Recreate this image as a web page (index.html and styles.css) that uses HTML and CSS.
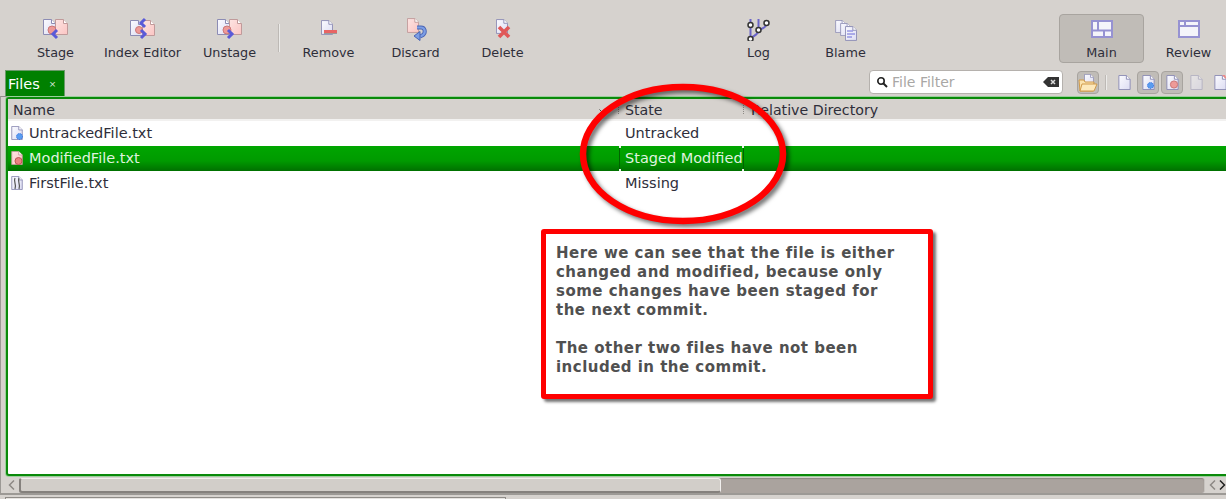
FILE: index.html
```html
<!DOCTYPE html>
<html lang="en">
<head>
<meta charset="utf-8">
<title>Files</title>
<link rel="stylesheet" href="styles.css">
</head>
<body>
<svg class="defs" width="0" height="0" aria-hidden="true">
  <defs>
    <linearGradient id="docfill" x1="0" y1="0" x2="1" y2="1"><stop offset="0" stop-color="#fbfbff"/><stop offset="1" stop-color="#dcdcf2"/></linearGradient>
    <linearGradient id="pinkfill" x1="0" y1="0" x2="1" y2="1"><stop offset="0" stop-color="#fde4e2"/><stop offset="1" stop-color="#fbc5c3"/></linearGradient>
    <symbol id="doc" viewBox="0 0 13 16"><path d="M.5.5h8l4 4v11H.5z" fill="url(#docfill)" stroke="#8c8cb4"/><path d="M8.5.5v4h4" fill="#fff" stroke="#8c8cb4"/></symbol>
    <symbol id="pink" viewBox="0 0 13 16"><path d="M.5.5h8l4 4v11H.5z" fill="url(#pinkfill)" stroke="#c09a9a"/><path d="M8.5.5v4h4" fill="#fff" stroke="#c09a9a"/></symbol>
  </defs>
</svg>
<div class="app">
  <header class="toolbar">
    <button class="tool">
      <svg class="ticon" viewBox="0 0 26 24"><use href="#doc" x="0" y="2" width="13" height="16"/><use href="#pink" x="12" y="2" width="13" height="16"/><circle cx="9" cy="13" r="4" fill="#ee9a98" stroke="#c77"/><path d="M14 13l-4 4 4 4" fill="none" stroke="#5a5ad8" stroke-width="3"/></svg>
      <span>Stage</span>
    </button>
    <button class="tool">
      <svg class="ticon" viewBox="0 0 26 24"><use href="#doc" x="0" y="3" width="13" height="16"/><use href="#pink" x="12" y="3" width="13" height="16"/><circle cx="9" cy="13" r="3.500" fill="#ee9a98" stroke="#c77"/><path d="M15 2l-4 4 4 4" fill="none" stroke="#5a5ad8" stroke-width="3"/><path d="M11 13l4 4-4 4" fill="none" stroke="#5a5ad8" stroke-width="3"/></svg>
      <span>Index Editor</span>
    </button>
    <button class="tool">
      <svg class="ticon" viewBox="0 0 26 24"><use href="#doc" x="0" y="2" width="13" height="16"/><use href="#pink" x="12" y="2" width="13" height="16"/><circle cx="10" cy="13" r="4" fill="#ee9a98" stroke="#c77"/><path d="M11 13l4 4-4 4" fill="none" stroke="#5a5ad8" stroke-width="3"/></svg>
      <span>Unstage</span>
    </button>
    <i class="tsep"></i>
    <button class="tool">
      <svg class="ticon" viewBox="0 0 26 24"><use href="#doc" x="5" y="3" width="12" height="15"/><rect x="8" y="13" width="13" height="3" fill="#e86464"/><rect x="8" y="16" width="13" height="1" fill="#999"/></svg>
      <span>Remove</span>
    </button>
    <button class="tool">
      <svg class="ticon" viewBox="0 0 26 24"><use href="#pink" x="4" y="1" width="12" height="15"/><path d="M14 10.500h4c4 0 5 5 2 7.500l-3 1.500" fill="none" stroke="#4a64b4" stroke-width="4"/><path d="M14 10.500h4c4 0 5 5 2 7.500l-3 1.500" fill="none" stroke="#7c9ee4" stroke-width="2.200"/><path d="M11 19l6-4.500v9z" fill="#7c9ee4" stroke="#4a64b4"/></svg>
      <span>Discard</span>
    </button>
    <button class="tool">
      <svg class="ticon" viewBox="0 0 26 24"><use href="#doc" x="6" y="2" width="12" height="15"/><path d="M9 10l10 10M19 10l-10 10" stroke="#e05858" stroke-width="3.600" fill="none"/></svg>
      <span>Delete</span>
    </button>
    <button class="tool tool-log">
      <svg class="ticon" viewBox="0 0 26 24"><g fill="none" stroke="#6a64c8" stroke-width="2"><path d="M4.500 2v18M12.500 2v11M20.500 6c0 4-4 6-8 7M12.500 13c0 4-4 6-8 8"/></g><g fill="#fff" stroke="#333" stroke-width="1.500"><circle cx="4.500" cy="8" r="2.500"/><circle cx="12.500" cy="13" r="2.500"/><circle cx="20.500" cy="6" r="2.500"/><circle cx="4.500" cy="22" r="2.500"/></g></svg>
      <span>Log</span>
    </button>
    <button class="tool">
      <svg class="ticon" viewBox="0 0 26 24"><use href="#doc" x="2" y="3" width="11" height="13"/><use href="#doc" x="7" y="6" width="11" height="13"/><use href="#doc" x="12" y="9" width="12" height="15"/><path d="M14 14h6M14 17h8M14 20h5" stroke="#6a6ad8"/></svg>
      <span>Blame</span>
    </button>
    <button class="tool tool-main active">
      <svg class="ticon" viewBox="0 0 26 24"><g fill="none" stroke="#9692d2" stroke-width="2"><rect x="3" y="4" width="20" height="16" fill="#f4f4fa"/><path d="M2 13.500h22M9 4v9M15 13v7"/></g></svg>
      <span>Main</span>
    </button>
    <button class="tool tool-review">
      <svg class="ticon" viewBox="0 0 26 24"><g fill="none" stroke="#9692d2" stroke-width="2"><rect x="3" y="4" width="20" height="16" fill="#f4f4fa"/><path d="M2 9h22M9 4v5"/></g></svg>
      <span>Review</span>
    </button>
  </header>

  <div class="tabbar">
    <div class="tab"><span>Files</span><b>×</b></div>
    <div class="filter">
      <svg class="mag" viewBox="0 0 12 12"><circle cx="5" cy="5" r="3.200" fill="none" stroke="#222" stroke-width="1.600"/><path d="M7.500 7.500l3.500 3.500" stroke="#222" stroke-width="2"/></svg>
      <span class="ph">File Filter</span>
      <svg class="clear" viewBox="0 0 16 10"><path d="M0 5l5-5h11v10H5z" fill="#333"/><path d="M8 3l4 4M12 3l-4 4" stroke="#ddd" stroke-width="1.500"/></svg>
    </div>
    <div class="filetools">
      <span class="ft on"><svg viewBox="0 0 20 18" width="20" height="18"><use href="#doc" x="6" y="0" width="10" height="12"/><path d="M1 6h5l1 2h9l-1 9H2z" fill="#fbe3ae" stroke="#d09a4a"/><path d="M4 10h15l-3 7H2z" fill="#fde9bc" stroke="#d09a4a"/></svg></span>
      <i class="fsep"></i>
      <span class="ft"><svg viewBox="0 0 13 15" width="13" height="15"><use href="#doc" width="13" height="15"/></svg></span>
      <span class="ft on"><svg viewBox="0 0 13 15" width="13" height="15"><use href="#doc" width="13" height="15"/><circle cx="8.500" cy="10.500" r="3" fill="#5a9cf0" stroke="#2a6ce0" stroke-dasharray="1 1"/></svg></span>
      <span class="ft on"><svg viewBox="0 0 13 15" width="13" height="15"><use href="#doc" width="13" height="15"/><circle cx="8" cy="9.500" r="3.600" fill="#ee9a98" stroke="#c77"/></svg></span>
      <span class="ft pale"><svg viewBox="0 0 13 15" width="13" height="15"><use href="#doc" width="13" height="15"/></svg></span>
      <span class="ft"><svg viewBox="0 0 13 15" width="13" height="15"><use href="#doc" width="13" height="15"/><path d="M8 0h3l2 4v1z" fill="#ee8a88"/></svg></span>
    </div>
  </div>

  <main class="frame">
    <div class="panel">
      <div class="thead">
        <div class="th th-name">Name<svg class="sort" viewBox="0 0 8 5"><path d="M.5.500L4 4 7.500.500" fill="none" stroke="#444"/></svg></div>
        <div class="th th-state">State</div>
        <div class="th th-dir">Relative Directory</div>
      </div>
      <div class="row">
        <div class="td td-name">
          <svg class="ficon" viewBox="0 0 13 15"><use href="#doc" width="12" height="14"/><circle cx="8.500" cy="10.500" r="3" fill="#5a9cf0" stroke="#2a6ce0" stroke-dasharray="1 1"/></svg>UntrackedFile.txt
        </div>
        <div class="td td-state">Untracked</div>
        <div class="td"></div>
      </div>
      <div class="row selected">
        <div class="td td-name">
          <svg class="ficon" viewBox="0 0 13 15"><use href="#pink" width="12" height="14"/><circle cx="7.500" cy="10" r="3.500" fill="#e88482" stroke="#b55"/></svg>ModifiedFile.txt
        </div>
        <div class="td td-state focus">Staged Modified<i class="c1"></i><i class="c2"></i><i class="c3"></i><i class="c4"></i></div>
        <div class="td"></div>
      </div>
      <div class="row">
        <div class="td td-name">
          <svg class="ficon" viewBox="0 0 13 15"><use href="#doc" width="12" height="14"/><path d="M4 2c-2 4 2 6 0 11M8 2c-2 4 2 6 0 11" fill="none" stroke="#555" stroke-width="1.200"/></svg>FirstFile.txt
        </div>
        <div class="td td-state">Missing</div>
        <div class="td"></div>
      </div>
    </div>
    <div class="hscroll">
      <span class="arrow arrow-l"><svg viewBox="0 0 7 10" width="7" height="10"><path d="M6 .500L1.500 5 6 9.500" fill="none" stroke="#8d8985" stroke-width="1.500"/></svg></span>
      <div class="trough"><div class="thumb"></div></div>
      <span class="arrow arrow-l2"><svg viewBox="0 0 7 10" width="7" height="10"><path d="M6 .500L1.500 5 6 9.500" fill="none" stroke="#8d8985" stroke-width="1.500"/></svg></span>
      <span class="arrow arrow-r"><svg viewBox="0 0 7 10" width="7" height="10"><path d="M1 .500L5.500 5 1 9.500" fill="none" stroke="#222" stroke-width="1.500"/></svg></span>
    </div>
  </main>
  <footer class="foot"><div class="foot-tab"></div></footer>

  <svg class="ring" viewBox="0 0 224 160" width="224" height="160" aria-hidden="true"><ellipse cx="104" cy="72" rx="100" ry="67" fill="none" stroke="#ff0000" stroke-width="6.500"/></svg>
  <aside class="note">
    <p>Here we can see that the file is either<br>changed and modified, because only<br>some changes have been staged for<br>the next commit.</p>
    <p>The other two files have not been<br>included in the commit.</p>
  </aside>
</div>
</body>
</html>
```

FILE: styles.css
```css
* { box-sizing: border-box; }
html, body { margin: 0; height: 100%; overflow: hidden; background: #d6d2ce; }
.defs { position: absolute; }
.app {
  position: relative;
  width: 1226px;
  height: 499px;
  overflow: hidden;
  display: flex;
  flex-direction: column;
  font-family: "DejaVu Sans", sans-serif;
  color: #2e2e3a;
}

/* toolbar */
.toolbar { flex: 0 0 70px; display: flex; align-items: flex-start; padding-left: 12px; padding-top: 14px; }
.tool {
  flex: 0 0 87px;
  height: 49px;
  padding: 2px 0 0;
  border: 1px solid transparent;
  border-radius: 4px;
  background: none;
  font: 12.8px/16px "DejaVu Sans", sans-serif;
  color: #2e2e3a;
  display: flex;
  flex-direction: column;
  align-items: center;
}
.ticon { width: 26px; height: 24px; margin-bottom: 4px; }
.tsep { flex: 0 0 2px; height: 28px; margin: 10px 5px 0; background: linear-gradient(90deg, #bdb9b5 50%, #ecebe9 50%); }
.tool-log { margin-left: 169px; }
.tool-main { flex-basis: 85px; margin-left: 170px; }
.tool-review { margin-left: 1px; }
.active { background: #c0bcb7; border-color: #a8a49f; }

/* tab row */
.tabbar { flex: 0 0 26px; display: flex; align-items: flex-start; padding-left: 5px; }
.tab {
  flex: 0 0 60px;
  height: 26px;
  padding-left: 2px;
  background: #008000;
  border: 1px solid #6a9a6a;
  border-bottom: 0;
  color: #fff;
  font-size: 14.5px;
  line-height: 24px;
  display: flex;
  align-items: center;
  gap: 9px;
}
.tab b { font-weight: normal; font-size: 9px; color: #d8e8d8; }
.filter {
  flex: 0 0 194px;
  height: 24px;
  margin-left: 804px;
  background: #fff;
  border: 1px solid #b5b1ad;
  border-radius: 4px;
  display: flex;
  align-items: center;
  padding-left: 6px;
  font-size: 14px;
}
.mag { width: 12px; height: 12px; }
.ph { margin-left: 4px; color: #a9a7a5; flex: 1; }
.clear { width: 16px; height: 10px; margin-right: 3px; }
.filetools { display: flex; align-items: flex-start; margin-left: 14px; margin-top: 1px; gap: 2px; flex: none; }
.ft { flex: 0 0 22px; height: 23px; display: flex; align-items: center; justify-content: center; border: 1px solid transparent; border-radius: 4px; }
.ft.on { background: #c0bcb7; border-color: #a8a49f; }
.ft.pale { opacity: .45; }
.fsep { flex: 0 0 2px; height: 15px; margin: 4px 4px 0; background: linear-gradient(90deg, #bdb9b5 50%, #ecebe9 50%); }

/* frame & table */
.frame { flex: 0 0 397px; border-top: 1px solid #8f8c88; border-left: 1px solid #9c9995; padding-left: 5px; display: flex; flex-direction: column; }
.panel {
  flex: 0 0 379px;
  margin-right: -4px;
  background: #fff;
  border: 2px solid #0a8a0a;
  border-right: 0;
  border-radius: 3px 0 0 3px;
  box-shadow: 0 0 0 1px #9ccf9c;
}
.thead, .row { display: grid; grid-template-columns: 611px 125px 1fr; }
.thead { height: 22px; padding-top: 1px; background: #d6d2ce; border-bottom: 2px solid #f2f1f0; font-size: 14.2px; line-height: 20px; }
.th { position: relative; padding-left: 5px; }
.th-state { padding-left: 6px; }
.th-dir { padding-left: 7px; }
.sort { position: absolute; right: 12px; top: 9px; width: 8px; height: 5px; }
.th-state::before, .th-dir::before { content: ""; position: absolute; left: -1px; top: 5px; height: 9px; border-left: 1px dotted #8d8985; }
.row { height: 25px; font-size: 14.5px; line-height: 24px; }
.td { white-space: nowrap; position: relative; }
.td-name { display: flex; align-items: center; height: 24px; padding-left: 3px; }
.td-state { padding-left: 6px; }
.ficon { width: 13px; height: 15px; margin-right: 5px; flex: none; }
.selected { background: linear-gradient(#00a600, #009a00 60%, #007000); color: #dff2df; }
.focus { border-left: 1px solid #006400; border-right: 1px solid #006400; padding-left: 5px; }
.focus i { position: absolute; width: 2px; height: 2px; background: #e8f4e8; }
.c1 { left: -1px; top: 0; }
.c2 { right: -1px; top: 0; }
.c3 { left: -1px; bottom: 0; }
.c4 { right: -1px; bottom: 0; }

/* scrollbar */
.hscroll { flex: 0 0 17px; display: flex; align-items: center; margin-left: -5px; padding-top: 1px; }
.arrow { flex: 0 0 10px; display: flex; justify-content: center; }
.arrow-l { margin-left: 5px; }
.arrow-l2 { margin-left: 2px; }
.trough { flex: 0 0 1186px; margin-left: 3px; height: 15px; background: #aaa39e; border-radius: 3px; border-right: 1px solid #c6c2be; box-shadow: 0 1px 1px #8c8782 inset; }
.thumb { width: 702px; height: 15px; background: #d2cec9; border: 1px solid #f2f0ee; border-bottom: 2px solid #85817d; border-left: 2px solid #85817d; border-radius: 3px; }

/* bottom */
.foot { flex: 1; border-top: 2px solid #9c9995; padding: 2px 0 0 5px; }
.foot-tab { width: 501px; height: 4px; border: 1px solid #8f8c88; border-bottom: 0; background: #e6e3e0; }

/* annotations drawn over the window */
.ring { position: absolute; left: 579px; top: 82px; filter: drop-shadow(3px 3px 2px rgba(0,0,0,.55)); }
.note {
  position: absolute;
  left: 541px;
  top: 229px;
  width: 392px;
  height: 170px;
  padding: 10px 0 0 10px;
  background: #fff;
  border: 5px solid #ff0000;
  border-radius: 3px;
  box-shadow: 3px 3px 3px rgba(0,0,0,.55);
  font-size: 15px;
  line-height: 19px;
  font-weight: 700;
  letter-spacing: .48px;
  color: #505050;
}
.note p { margin: 0 0 19px; }
```
